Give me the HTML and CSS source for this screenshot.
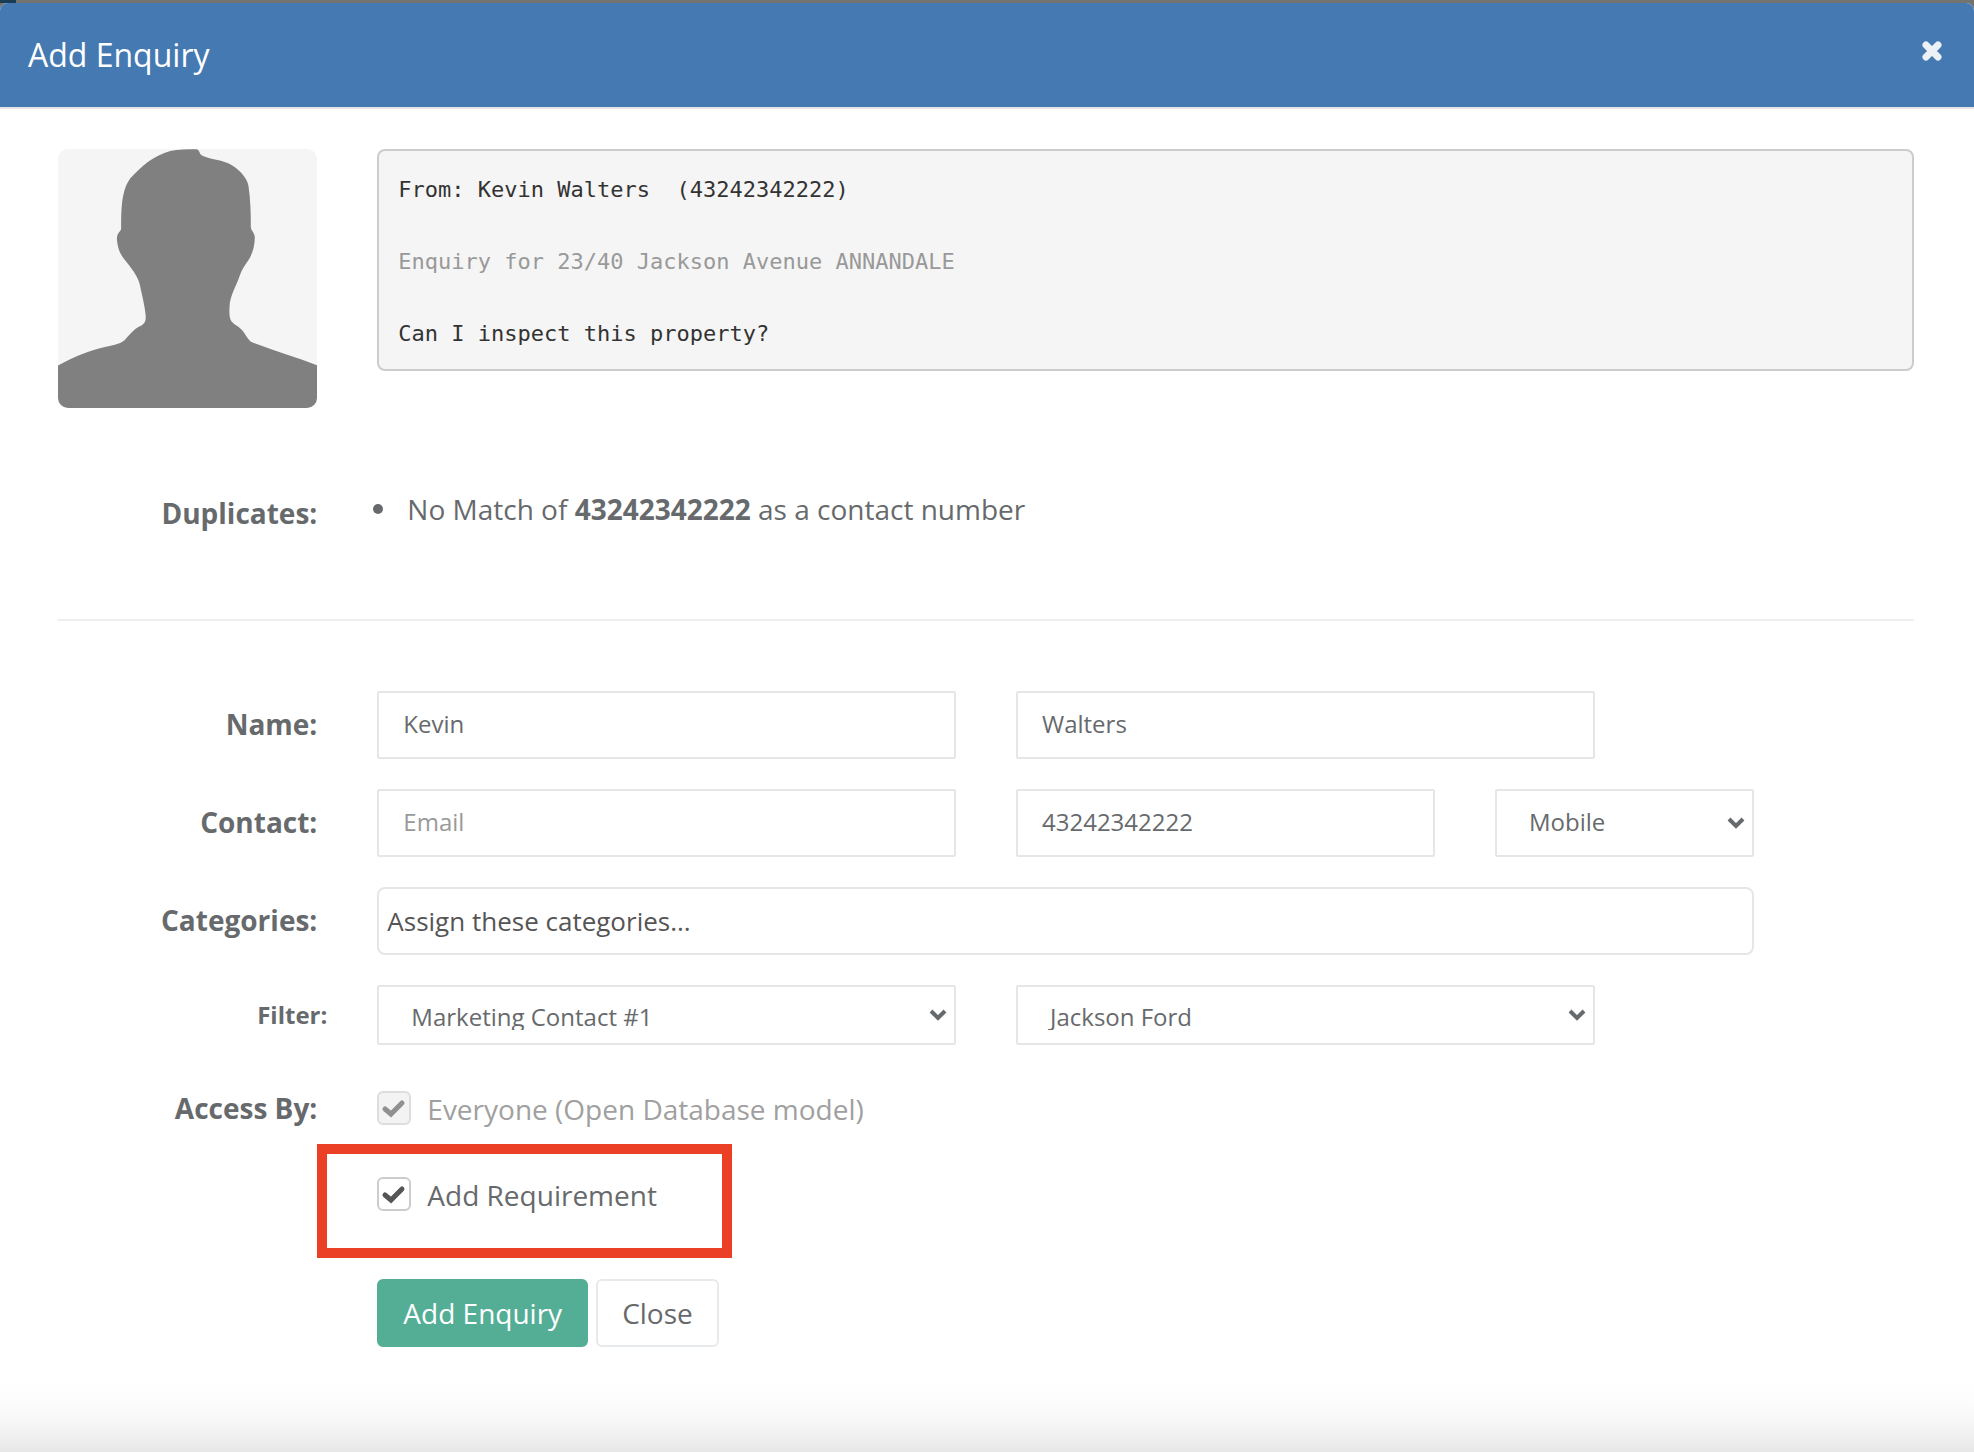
FILE: index.html
```html
<!DOCTYPE html>
<html lang="en">
<head>
    <meta charset="UTF-8">
    <meta name="viewport" content="width=device-width, initial-scale=1.0">
    <title>Add Enquiry</title>
    <link rel="stylesheet" href="styles.css">
</head>
<body>

<div class="modal">
    <header class="modal-header">
        <h1>Add Enquiry</h1>
        <button type="button" class="modal-close" aria-label="Close dialog">
            <svg viewBox="0 0 20 22" width="20" height="22"><path d="M4 5l12 12M16 5L4 17" fill="none" stroke="currentColor" stroke-width="7" stroke-linecap="round"/></svg>
        </button>
    </header>

    <form class="modal-body">
        <div class="row">
            <svg class="avatar" viewBox="54 57 780 780" role="img" aria-label="Contact photo">
                <path d="M54 708C100 684 150 662 198 652C222 646 240 644 254 632C270 614 282 600 298 591C310 585 318 580 318 562C317 540 310 510 302 474C298 450 288 434 270 410C252 386 240 376 234 348C230 330 230 318 236 310C240 304 244 302 244 294C244 230 246 170 278 138C318 96 360 66 410 60C430 57 450 57 470 58C480 59 478 70 486 76C506 88 538 88 566 100C596 114 622 142 627 168C633 210 634 250 634 290C634 302 645 308 646 322C646 348 640 368 630 386C616 408 608 416 600 440C592 466 572 496 570 530C569 550 569 564 575 574C584 586 596 588 608 602C618 614 624 628 634 637C700 664 770 682 834 708V837H54Z" fill="#808080"/>
            </svg>
            <pre class="message">From: Kevin Walters  (43242342222)

<span class="message-subject">Enquiry for 23/40 Jackson Avenue ANNANDALE</span>

Can I inspect this property?</pre>
        </div>

        <div class="row row-duplicates">
            <div class="label">Duplicates:</div>
            <ul class="duplicates">
                <li>No Match of <strong>43242342222</strong> as a contact number</li>
            </ul>
        </div>

        <hr class="divider">

        <div class="row">
            <label class="label" for="firstName">Name:</label>
            <input class="field col-4" type="text" id="firstName" value="Kevin">
            <input class="field col-4" type="text" id="lastName" value="Walters" aria-label="Last name">
        </div>

        <div class="row">
            <label class="label" for="email">Contact:</label>
            <input class="field col-4" type="email" id="email" placeholder="Email">
            <input class="field col-3" type="text" id="phone" value="43242342222" aria-label="Contact number">
            <div class="select col-2">
                <select class="field" id="phoneType" aria-label="Number type">
                    <option>Mobile</option>
                    <option>Home</option>
                    <option>Work</option>
                </select>
                <svg class="arrow" viewBox="0 0 18 12" width="18" height="12"><path d="M2 2l7 7 7-7" fill="none" stroke="currentColor" stroke-width="4"/></svg>
            </div>
        </div>

        <div class="row">
            <label class="label" for="categories">Categories:</label>
            <input class="field field-tags" type="text" id="categories" placeholder="Assign these categories...">
        </div>

        <div class="row">
            <label class="label label-small" for="filter">Filter:</label>
            <div class="select select-small col-4">
                <select class="field" id="filter">
                    <option>Marketing Contact #1</option>
                </select>
                <svg class="arrow" viewBox="0 0 18 12" width="18" height="12"><path d="M2 2l7 7 7-7" fill="none" stroke="currentColor" stroke-width="4"/></svg>
            </div>
            <div class="select select-small col-4">
                <select class="field" id="agent" aria-label="Agent">
                    <option>Jackson Ford</option>
                </select>
                <svg class="arrow" viewBox="0 0 18 12" width="18" height="12"><path d="M2 2l7 7 7-7" fill="none" stroke="currentColor" stroke-width="4"/></svg>
            </div>
        </div>

        <div class="row">
            <div class="label">Access By:</div>
            <div class="check">
                <label class="check-label disabled">
                    <input type="checkbox" checked disabled>
                    <svg class="tick" viewBox="0 0 34 34" width="34" height="34"><path d="M8 18l6 5L25 12" fill="none" stroke="currentColor" stroke-width="5" stroke-linecap="round"/></svg>
                    Everyone (Open Database model)
                </label>
            </div>
        </div>

        <div class="row">
            <div class="check">
                <label class="check-label highlight">
                    <input type="checkbox" checked>
                    <svg class="tick" viewBox="0 0 34 34" width="34" height="34"><path d="M8 18l6 5L25 12" fill="none" stroke="currentColor" stroke-width="5" stroke-linecap="round"/></svg>
                    Add Requirement
                </label>
            </div>
        </div>

        <div class="row">
            <div class="actions">
                <button type="submit" class="btn btn-primary">Add Enquiry</button>
                <button type="button" class="btn">Close</button>
            </div>
        </div>
    </form>
</div>

</body>
</html>
```
FILE: styles.css
```css
*, *::before, *::after {
    box-sizing: border-box;
}

body {
    margin: 0;
    padding-top: 3px;
    min-height: 100vh;
    display: flex;
    font-family: "Open Sans", sans-serif;
    font-size: 28px;
    line-height: 40px;
    color: #676a6c;
    background: linear-gradient(#1a3c55, #1a3c55) 0 0 / 16px 3px no-repeat #75736f;
}

.modal {
    flex: 1;
    border-radius: 8px 8px 0 0;
    overflow: hidden;
    background: linear-gradient(to top, #e7e7e7, #f4f4f4 24px, #fcfcfc 48px, #fff 72px);
}

.modal-header {
    display: flex;
    justify-content: space-between;
    align-items: center;
    height: 106px;
    padding: 0 32px 0 28px;
    background-color: #4479b2;
    border-bottom: 2px solid #e5e5e5;
    color: #fff;
}

.modal-header h1 {
    margin: 0;
    font-size: 32px;
    font-weight: 400;
}

.modal-close {
    display: flex;
    margin-bottom: 8px;
    padding: 0;
    border: none;
    background: none;
    color: #ecf1f7;
    cursor: pointer;
}

.modal-body {
    display: flex;
    flex-direction: column;
    gap: 30px;
    padding: 40px 60px 40px 58px;
}

.row {
    display: grid;
    grid-template-columns: repeat(12, 1fr);
    column-gap: 60px;
    align-items: start;
}

.col-2 {
    grid-column: span 2;
}

.col-3 {
    grid-column: span 3;
}

.col-4 {
    grid-column: span 4;
}

.avatar {
    grid-column: span 2;
    display: block;
    width: 100%;
    border-radius: 10px;
    background-color: #f5f5f5;
}

.message {
    grid-column: span 10;
    margin: 0;
    padding: 21px 19px 17px;
    border: 2px solid #ccc;
    border-radius: 8px;
    background-color: #f5f5f5;
    color: #333;
    font-family: "DejaVu Sans Mono", monospace;
    font-size: 22px;
    line-height: 36px;
}

.message-subject {
    color: #999;
}

.label {
    grid-column: span 2;
    padding-top: 13px;
    font-weight: 700;
    text-align: right;
}

.label-small {
    margin-right: -10px;
    padding-top: 10px;
    font-size: 24px;
}

.row-duplicates {
    margin: 42px 0 56px;
}

.duplicates {
    grid-column: span 10;
    margin: 0;
    padding: 9px 0 0 30px;
    list-style: none;
}

.duplicates li {
    position: relative;
}

.duplicates li::before {
    content: "";
    position: absolute;
    left: -34px;
    top: 15px;
    width: 10px;
    height: 10px;
    border-radius: 50%;
    background-color: #676a6c;
}

.divider {
    width: 100%;
    margin: 0 0 40px;
    border: none;
    border-top: 2px solid #eee;
}

.field {
    width: 100%;
    height: 68px;
    padding: 0 24px 3px;
    border: 2px solid #e5e6e7;
    border-radius: 2px;
    background-color: #fff;
    color: #676a6c;
    font-family: inherit;
    font-size: 24px;
    outline: none;
}

.field::placeholder {
    color: #999;
}

.field:focus {
    border-color: #1ab394;
}

.field-tags {
    grid-column: span 9;
    padding: 0 8px;
    border-radius: 8px;
    font-size: 26px;
}

.field-tags::placeholder {
    color: #555;
}

.select {
    position: relative;
}

.select .field {
    display: block;
    padding-left: 32px;
    appearance: none;
}

.select-small .field {
    height: 60px;
    padding: 13px 28px 13px;
    text-indent: 4px;
}

.arrow {
    position: absolute;
    right: 9px;
    top: 28px;
    pointer-events: none;
}

.select-small .arrow {
    top: 24px;
}

.check {
    grid-column: 3 / span 10;
    padding: 16px 0 4px;
}

.check-label {
    position: relative;
    display: flex;
    width: fit-content;
    gap: 16px;
    line-height: 36px;
}

.check-label input {
    appearance: none;
    width: 34px;
    height: 34px;
    margin: 0;
    border: 2px solid #ccc;
    border-radius: 6px;
    background-color: #fff;
}

.tick {
    position: absolute;
    left: 0;
    top: 0;
    color: #555;
    pointer-events: none;
}

.disabled {
    color: #a0a0a0;
}

.disabled input {
    border-color: #ddd;
    background-color: #f3f3f3;
}

.disabled .tick {
    color: #909090;
}

/* red marker drawn around the option */
.highlight::after {
    content: "";
    position: absolute;
    left: -60px;
    top: -33px;
    width: 415px;
    height: 114px;
    border: 10px solid #eb4025;
    pointer-events: none;
}

.actions {
    grid-column: 3 / span 10;
    display: flex;
    gap: 8px;
    margin-top: 32px;
}

.btn {
    height: 68px;
    padding: 0 24px;
    border: 2px solid #e7eaec;
    border-radius: 6px;
    background-color: #fff;
    color: #676a6c;
    font-family: inherit;
    font-size: 28px;
    cursor: pointer;
}

.btn-primary {
    border-color: #54ae96;
    background-color: #54ae96;
    color: #fff;
}
```
